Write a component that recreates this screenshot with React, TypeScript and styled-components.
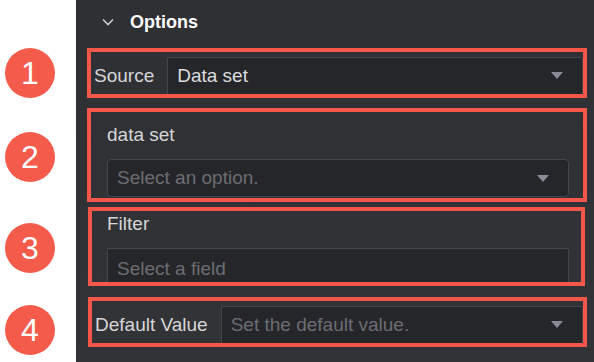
import React from "react";
import styled, { createGlobalStyle } from "styled-components";

const GlobalStyle = createGlobalStyle`
  html, body {
    margin: 0;
    padding: 0;
    background: #ffffff;
  }
  body {
    font-family: "Liberation Sans", Arial, sans-serif;
  }
`;

const Page = styled.div`
  display: flex;
  width: 594px;
  height: 362px;
  overflow: hidden;
`;

const Aside = styled.div`
  width: 76px;
  flex-shrink: 0;
  background: #ffffff;
  display: flex;
  flex-direction: column;
  padding-top: 48px;
  box-sizing: border-box;
`;

const Marker = styled.div<{ $gap: number }>`
  width: 50px;
  height: 50px;
  margin-left: 5px;
  margin-top: ${(p) => p.$gap}px;
  border-radius: 50%;
  background: #f45b4b;
  color: #ffffff;
  display: flex;
  align-items: center;
  justify-content: center;
  font-size: 32px;
  line-height: 1;
`;

const Panel = styled.div`
  flex: 1;
  background: linear-gradient(180deg, #2f3034 0%, #323337 100%);
  display: flex;
  flex-direction: column;
  padding-left: 11px;
  box-sizing: border-box;
`;

const Header = styled.div`
  height: 48px;
  display: flex;
  align-items: center;
  padding-left: 15px;
  gap: 16px;
  color: #ffffff;
  font-size: 18px;
  font-weight: bold;
  box-sizing: border-box;
  padding-bottom: 4px;
`;

const Callout = styled.div<{ $top: number; $left?: number; $width: number; $height: number }>`
  margin-top: ${(p) => p.$top}px;
  margin-left: ${(p) => p.$left ?? 0}px;
  width: ${(p) => p.$width}px;
  height: ${(p) => p.$height}px;
  border: 4px solid #f4574a;
  box-sizing: border-box;
  overflow: hidden;
`;

const InlineField = styled.div<{ $pad: number }>`
  display: flex;
  align-items: center;
  height: 100%;
  padding-top: 5px;
  padding-left: ${(p) => p.$pad}px;
  box-sizing: border-box;
  gap: 13px;
`;

const StackedField = styled.div<{ $top: number; $left: number; $right: number }>`
  display: flex;
  flex-direction: column;
  gap: 13px;
  padding: ${(p) => `${p.$top}px ${p.$right}px 0 ${p.$left}px`};
`;

const Label = styled.span`
  color: #d6d6d8;
  font-size: 19px;
  line-height: 22px;
  white-space: nowrap;
`;

const Select = styled.div<{ $rounded?: boolean; $height: number; $inline?: boolean }>`
  flex: ${(p) => (p.$inline ? "1" : "none")};
  height: ${(p) => p.$height}px;
  display: flex;
  align-items: center;
  justify-content: space-between;
  padding: 0 19px 0 9px;
  box-sizing: border-box;
  background: #25262a;
  border: 1px solid #45464b;
  border-radius: ${(p) => (p.$rounded ? "4px" : "2px")};
  font-size: 19px;
`;

const Value = styled.span<{ $placeholder?: boolean }>`
  color: ${(p) => (p.$placeholder ? "#6c6d72" : "#dcdcde")};
  white-space: nowrap;
`;

const Caret = styled.span`
  width: 0;
  height: 0;
  border-left: 6px solid transparent;
  border-right: 6px solid transparent;
  border-top: 7px solid #8a8b96;
`;

const Chevron = () => (
  <svg width="12" height="8" viewBox="0 0 12 8" fill="none">
    <polyline points="1,1.5 6,6.5 11,1.5" stroke="#c9c9cc" strokeWidth="1.6" />
  </svg>
);

export default function App() {
  return (
    <Page>
      <GlobalStyle />
      <Aside>
        <Marker $gap={0}>1</Marker>
        <Marker $gap={34}>2</Marker>
        <Marker $gap={41}>3</Marker>
        <Marker $gap={32}>4</Marker>
      </Aside>
      <Panel>
        <Header>
          <Chevron />
          Options
        </Header>

        <Callout $top={0} $width={500} $height={50}>
          <InlineField $pad={3}>
            <Label>Source</Label>
            <Select $inline $height={38}>
              <Value>Data set</Value>
              <Caret />
            </Select>
          </InlineField>
        </Callout>

        <Callout $top={10} $width={500} $height={94}>
          <StackedField $top={12} $left={16} $right={14}>
            <Label>data set</Label>
            <Select $rounded $height={38}>
              <Value $placeholder>Select an option.</Value>
              <Caret />
            </Select>
          </StackedField>
        </Callout>

        <Callout $top={5} $left={1} $width={497} $height={79}>
          <StackedField $top={2} $left={15} $right={12}>
            <Label>Filter</Label>
            <Select $height={42}>
              <Value $placeholder>Select a field</Value>
            </Select>
          </StackedField>
        </Callout>

        <Callout $top={11} $left={1} $width={499} $height={50}>
          <InlineField $pad={3}>
            <Label>Default Value</Label>
            <Select $inline $height={38}>
              <Value $placeholder>Set the default value.</Value>
              <Caret />
            </Select>
          </InlineField>
        </Callout>
      </Panel>
    </Page>
  );
}
